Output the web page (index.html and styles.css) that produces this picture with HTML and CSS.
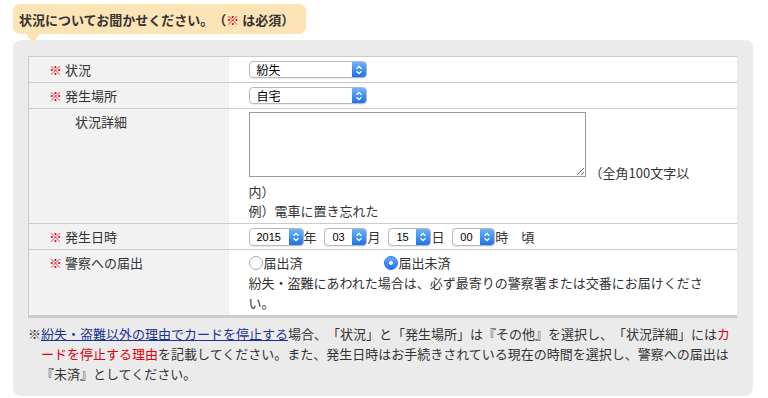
FILE: index.html
```html
<!DOCTYPE html>
<html lang="ja">
<head>
  <meta charset="UTF-8">
  <meta name="viewport" content="width=device-width, initial-scale=1.0">
  <title>状況について</title>
  <link rel="stylesheet" href="styles.css">
</head>
<body>

  <div class="bubble">状況についてお聞かせください。（<span class="req">※</span> は必須）</div>

  <div class="panel">
    <table class="form">
      <colgroup>
        <col class="col-label">
        <col>
      </colgroup>
      <tr>
        <th><span class="req">※</span> 状況</th>
        <td>
          <span class="sel sel-wide"><span class="sel-text">紛失</span><span class="sel-btn"><svg width="8" height="10" viewBox="0 0 8 10"><path d="M1.5 3.8 L4 1.5 L6.5 3.8 M1.5 6.2 L4 8.5 L6.5 6.2" fill="none" stroke="#fff" stroke-width="1.3"/></svg></span></span>
        </td>
      </tr>
      <tr>
        <th><span class="req">※</span> 発生場所</th>
        <td>
          <span class="sel sel-wide"><span class="sel-text">自宅</span><span class="sel-btn"><svg width="8" height="10" viewBox="0 0 8 10"><path d="M1.5 3.8 L4 1.5 L6.5 3.8 M1.5 6.2 L4 8.5 L6.5 6.2" fill="none" stroke="#fff" stroke-width="1.3"/></svg></span></span>
        </td>
      </tr>
      <tr>
        <th class="plain">状況詳細</th>
        <td class="detail">
          <textarea class="memo"></textarea>（全角100文字以内）<br>
          例）電車に置き忘れた
        </td>
      </tr>
      <tr>
        <th><span class="req">※</span> 発生日時</th>
        <td class="date">
          <span class="sel sel-year"><span class="sel-text num">2015</span><span class="sel-btn"><svg width="8" height="10" viewBox="0 0 8 10"><path d="M1.5 3.8 L4 1.5 L6.5 3.8 M1.5 6.2 L4 8.5 L6.5 6.2" fill="none" stroke="#fff" stroke-width="1.3"/></svg></span></span><span class="unit">年</span>
          <span class="sel sel-small"><span class="sel-text num">03</span><span class="sel-btn"><svg width="8" height="10" viewBox="0 0 8 10"><path d="M1.5 3.8 L4 1.5 L6.5 3.8 M1.5 6.2 L4 8.5 L6.5 6.2" fill="none" stroke="#fff" stroke-width="1.3"/></svg></span></span><span class="unit">月</span>
          <span class="sel sel-small"><span class="sel-text num">15</span><span class="sel-btn"><svg width="8" height="10" viewBox="0 0 8 10"><path d="M1.5 3.8 L4 1.5 L6.5 3.8 M1.5 6.2 L4 8.5 L6.5 6.2" fill="none" stroke="#fff" stroke-width="1.3"/></svg></span></span><span class="unit">日</span>
          <span class="sel sel-small"><span class="sel-text num">00</span><span class="sel-btn"><svg width="8" height="10" viewBox="0 0 8 10"><path d="M1.5 3.8 L4 1.5 L6.5 3.8 M1.5 6.2 L4 8.5 L6.5 6.2" fill="none" stroke="#fff" stroke-width="1.3"/></svg></span></span><span class="unit">時　頃</span>
        </td>
      </tr>
      <tr class="last">
        <th><span class="req">※</span> 警察への届出</th>
        <td class="police">
          <div class="radios">
            <label class="opt"><span class="radio"></span>届出済</label>
            <label class="opt"><span class="radio on"></span>届出未済</label>
          </div>
          紛失・盗難にあわれた場合は、必ず最寄りの警察署または交番にお届けください。
        </td>
      </tr>
    </table>

    <p class="note">※<a href="#">紛失・盗難以外の理由でカードを停止する</a>場合、「状況」と「発生場所」は『その他』を選択し、「状況詳細」には<span class="red">カードを停止する理由</span>を記載してください。また、発生日時はお手続きされている現在の時間を選択し、警察への届出は『未済』としてください。</p>
  </div>

</body>
</html>
```

FILE: styles.css
```css
body {
  margin: 0;
  background-color: #ffffff;
  color: #333333;
  font-family: "Noto Sans CJK JP", sans-serif;
  font-size: 13px;
  line-height: 19px;
  text-spacing-trim: space-all;
}

.req,
.red {
  color: #e50012;
}

/* 吹き出し */
.bubble {
  position: relative;
  display: inline-block;
  margin: 4px 0 0 13px;
  padding: 6px 12px 5px 6px;
  background-color: #fde4b6;
  border-radius: 7px;
  font-weight: bold;
}
.bubble::after {
  content: "";
  position: absolute;
  left: 13px;
  bottom: -9px;
  border-top: 9px solid #fde4b6;
  border-left: 7px solid transparent;
  border-right: 7px solid transparent;
}

.panel {
  margin: 6px 15px 0 13px;
  padding: 16px 16px 12px 15px;
  background-color: #ebebeb;
  border-radius: 8px;
}

/* フォーム表 */
.form {
  width: 100%;
  border-collapse: collapse;
  table-layout: fixed;
  border-left: 1px solid #cccccc;
}
.col-label {
  width: 200px;
}
.form th,
.form td {
  padding: 3px 0;
  border-top: 1px solid #cccccc;
  text-align: left;
  vertical-align: top;
  font-weight: normal;
}
.form th {
  padding-left: 20px;
  background-color: #f2f2f2;
}
.form th.plain {
  padding-left: 46px;
}
.form td {
  padding-left: 20px;
  padding-right: 30px;
  background-color: #ffffff;
}
.form tr.last th,
.form tr.last td {
  border-bottom: 3px solid #cccccc;
}
.form td.police {
  line-height: 20px;
  padding-bottom: 2px;
}

/* セレクト */
.sel {
  display: inline-flex;
  height: 15px;
  border: 1px solid #b9b9b9;
  border-radius: 4px;
  background-color: #ffffff;
  box-shadow: 0 1px 1px rgba(0, 0, 0, 0.08);
  vertical-align: top;
  margin-top: 1px;
  overflow: hidden;
}
.sel-wide {
  width: 116px;
}
.sel-year {
  width: 53px;
}
.sel-small {
  width: 41px;
}
.sel-text {
  flex: 1;
  padding-left: 7px;
  font-size: 12px;
  line-height: 16px;
  color: #000000;
}
.sel-text.num {
  font-family: "Liberation Sans", Arial, sans-serif;
  font-size: 11px;
}
.sel-btn {
  display: flex;
  align-items: center;
  justify-content: center;
  width: 14px;
  background: linear-gradient(#6db4fb, #1c6ff0);
}

.date .sel {
  height: 16px;
  margin-top: 1px;
}
.date .sel-text {
  line-height: 17px;
}
.unit {
  margin-right: 5px;
}

/* テキストエリア */
.memo {
  width: 331px;
  height: 59px;
  margin: 0 4px 5px 0;
  padding: 2px;
  border: 1px solid #9a9a9a;
  vertical-align: bottom;
  resize: both;
}

/* ラジオ */
.radios {
  display: flex;
}
.opt {
  display: flex;
  align-items: center;
  width: 135px;
}
.radio {
  width: 12px;
  height: 12px;
  margin-right: 1px;
  border: 1px solid #a9a9a9;
  border-radius: 50%;
  background-color: #ffffff;
}
.radio.on {
  border-color: #2a7be9;
  background: radial-gradient(circle, #ffffff 0 1.6px, transparent 2.2px), linear-gradient(#65abfa, #1f74ef);
}

/* 注意書き */
.note {
  margin: 6px 0 0 0;
  padding-left: 13px;
  text-indent: -13px;
  line-height: 20px;
}
.note a {
  color: #1d3195;
  text-decoration: underline;
}
```
